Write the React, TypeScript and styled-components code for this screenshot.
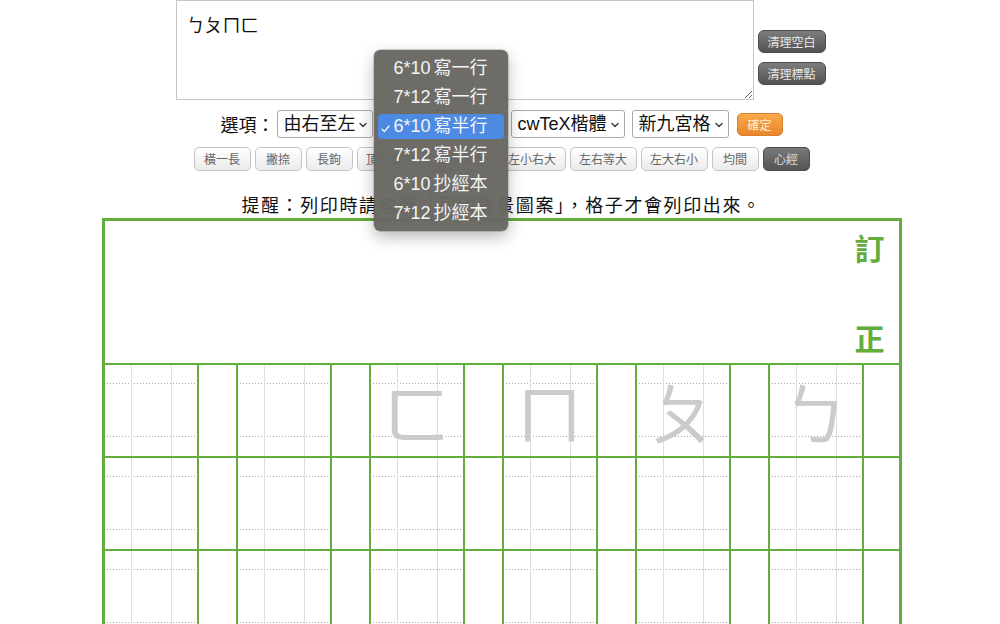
import styled, { createGlobalStyle } from "styled-components";

const GlobalStyle = createGlobalStyle`
  html, body {
    margin: 0;
    padding: 0;
    overflow: hidden;
    background: #fff;
  }
  body {
    font-family: "Liberation Sans", "Noto Sans CJK TC", sans-serif;
    color: #111;
  }
`;

const sizeOptions = [
  "6*10 寫一行",
  "7*12 寫一行",
  "6*10 寫半行",
  "7*12 寫半行",
  "6*10 抄經本",
  "7*12 抄經本",
];

const tools = [
  "橫一長",
  "撇捺",
  "長鉤",
  "頂天立地",
  "上下等大",
  "左小右大",
  "左右等大",
  "左大右小",
  "均間",
];

// ghost characters, by square index from the left (written right to left)
const ghosts: Record<number, string> = { 2: "ㄈ", 3: "ㄇ", 4: "ㄆ", 5: "ㄅ" };

const Chevron = () => (
  <svg width="8" height="6" viewBox="0 0 8 6">
    <polyline
      points="1,1.5 4,4.5 7,1.5"
      fill="none"
      stroke="#333"
      strokeWidth="1.3"
      strokeLinecap="round"
      strokeLinejoin="round"
    />
  </svg>
);

const Check = () => (
  <svg width="9" height="8" viewBox="0 0 9 8">
    <polyline
      points="1,4.2 3.4,6.6 8,1"
      fill="none"
      stroke="#fff"
      strokeWidth="1.2"
      strokeLinecap="round"
      strokeLinejoin="round"
    />
  </svg>
);

const App = () => {
  const rows = Array.from(Array(10), (_, i) => i);
  const cols = Array.from(Array(12), (_, i) => i);

  return (
    <Page>
      <GlobalStyle />
      <TopRow>
        <Editor defaultValue="ㄅㄆㄇㄈ" />
        <SideButtons>
          <DarkButton>清理空白</DarkButton>
          <DarkButton>清理標點</DarkButton>
        </SideButtons>
      </TopRow>

      <OptionsRow>
        <Label>選項：</Label>
        <SelectBox $w={96} $gap={4}>
          由右至左
          <Chevron />
        </SelectBox>
        <SelectBox $w={128} $gap={6}>
          6*10 寫半行
          <Chevron />
          <Menu>
            {sizeOptions.map((item, index) => (
              <MenuItem key={item} $active={index === 2}>
                <CheckSlot>{index === 2 && <Check />}</CheckSlot>
                {item}
              </MenuItem>
            ))}
          </Menu>
        </SelectBox>
        <SelectBox $w={114} $gap={7}>
          cwTeX楷體
          <Chevron />
        </SelectBox>
        <SelectBox $w={97} $gap={8}>
          新九宮格
          <Chevron />
        </SelectBox>
        <OrangeButton>確定</OrangeButton>
      </OptionsRow>

      <ToolRow>
        {tools.map((item) => (
          <ToolButton key={item} $w={27 + item.length * 10}>
            {item}
          </ToolButton>
        ))}
        <ToolButton $w={47} $dark>
          心經
        </ToolButton>
      </ToolRow>

      <Notice>提醒：列印時請勾選「列印背景圖案」，格子才會列印出來。</Notice>

      <Sheet>
        <SheetHeader>
          <HeaderChar>訂</HeaderChar>
          <HeaderChar>正</HeaderChar>
        </SheetHeader>
        <SheetBody>
          {rows.map((row) =>
            cols.map((col) => {
              const square = col % 2 === 0;
              const ghost = row === 0 && square ? ghosts[col / 2] : undefined;
              return (
                <Cell key={`${row}-${col}`} $square={square} $last={col === 11}>
                  {ghost && <Ghost>{ghost}</Ghost>}
                </Cell>
              );
            })
          )}
        </SheetBody>
      </Sheet>
    </Page>
  );
};

const Page = styled.div`
  padding-left: 3px;
  display: flex;
  flex-direction: column;
  align-items: center;
`;

const TopRow = styled.div`
  display: flex;
  align-items: flex-start;
  gap: 4px;
  margin-left: -2px;
`;

const Editor = styled.textarea`
  box-sizing: border-box;
  width: 578px;
  height: 100px;
  margin: 0;
  padding: 10px 10px;
  border: 1px solid #c6c6c6;
  font-family: "Noto Sans CJK TC", sans-serif;
  font-size: 18px;
  line-height: 26px;
  color: #111;
  outline: none;
`;

const SideButtons = styled.div`
  display: flex;
  flex-direction: column;
  gap: 9px;
  padding-top: 30px;
`;

const DarkButton = styled.button`
  box-sizing: border-box;
  width: 68px;
  height: 23px;
  padding: 0;
  border: 1px solid #4a4a4a;
  border-radius: 6px;
  background: linear-gradient(#7d7d7d, #525252);
  color: #e6e6e6;
  font-family: "Noto Sans CJK TC", sans-serif;
  font-size: 12px;
  line-height: 21px;
`;

const OptionsRow = styled.div`
  display: flex;
  align-items: center;
  margin-top: 10px;
  height: 28px;
`;

const Label = styled.span`
  font-family: "Noto Sans CJK TC", sans-serif;
  font-size: 18px;
  line-height: 28px;
  margin-right: 2px;
`;

const SelectBox = styled.div<{ $w: number; $gap: number }>`
  position: relative;
  box-sizing: border-box;
  width: ${(p) => p.$w}px;
  height: 28px;
  display: flex;
  align-items: center;
  justify-content: space-between;
  padding: 0 5px 0 6px;
  margin-right: ${(p) => p.$gap}px;
  border: 1px solid #a9a9a9;
  border-radius: 3px;
  background: #fff;
  font-size: 18px;
  line-height: 26px;
  white-space: nowrap;

  svg {
    margin-top: 2px;
  }
`;

const Menu = styled.div`
  position: absolute;
  z-index: 10;
  left: -4px;
  top: -61px;
  width: 134px;
  box-sizing: border-box;
  display: flex;
  flex-direction: column;
  gap: 4px;
  padding: 6px 4px 5px;
  border-radius: 6px;
  background: rgba(104, 103, 98, 0.97);
  box-shadow: 0 6px 16px rgba(0, 0, 0, 0.28), 0 0 0 0.5px rgba(0, 0, 0, 0.3);
`;

const MenuItem = styled.div<{ $active?: boolean }>`
  display: flex;
  align-items: center;
  height: 25px;
  border-radius: 4px;
  background: ${(p) => (p.$active ? "#4d8ae4" : "transparent")};
  color: #f4f4f4;
  font-size: 18px;
  line-height: 25px;
  word-spacing: -2px;
  white-space: nowrap;
`;

const CheckSlot = styled.span`
  display: flex;
  align-items: center;
  justify-content: center;
  width: 16px;
  padding-top: 2px;
`;

const OrangeButton = styled.button`
  box-sizing: border-box;
  width: 46px;
  height: 23px;
  padding: 0;
  border: 1px solid #d9802f;
  border-radius: 5px;
  background: linear-gradient(#f8a94a, #ea862c);
  color: #fdeedd;
  font-family: "Noto Sans CJK TC", sans-serif;
  font-size: 12px;
  line-height: 21px;
`;

const ToolRow = styled.div`
  display: flex;
  gap: 4px;
  margin-top: 9px;
`;

const ToolButton = styled.button<{ $w: number; $dark?: boolean }>`
  box-sizing: border-box;
  width: ${(p) => p.$w}px;
  height: 24px;
  padding: 0;
  border: 1px solid ${(p) => (p.$dark ? "#4c4c4c" : "#c4c4c4")};
  border-radius: 5px;
  background: ${(p) =>
    p.$dark ? "linear-gradient(#7a7a7a, #545454)" : "linear-gradient(#ffffff, #ebebeb)"};
  color: ${(p) => (p.$dark ? "#dadada" : "#666")};
  font-family: "Noto Sans CJK TC", sans-serif;
  font-size: 12px;
  line-height: 22px;
  white-space: nowrap;
  overflow: hidden;
`;

const Notice = styled.div`
  margin-top: 21px;
  height: 26px;
  font-family: "Noto Sans CJK TC", sans-serif;
  font-size: 18px;
  line-height: 24px;
  letter-spacing: 1.6px;
  color: #111;
`;

const green = "#63ad3d";

const Sheet = styled.div`
  box-sizing: border-box;
  width: 800px;
  border: 3px solid ${green};
  border-bottom: none;
`;

const SheetHeader = styled.div`
  height: 142px;
  box-sizing: content-box;
  border-bottom: 2px solid ${green};
  display: flex;
  flex-direction: column;
  justify-content: space-between;
  align-items: flex-end;
  padding: 0 14px 0 0;
`;

const HeaderChar = styled.div`
  font-family: "Noto Sans CJK TC", sans-serif;
  font-weight: 700;
  font-size: 30px;
  line-height: 30px;
  color: ${green};
  margin: 11px 0;
`;

const SheetBody = styled.div`
  display: grid;
  grid-template-columns: repeat(5, 94px 39px) 94px 1fr;
  grid-auto-rows: 93px;
`;

const dots = "repeating-linear-gradient(90deg, #a8a8a8 0 1px, transparent 1px 3px)";

const Cell = styled.div<{ $square: boolean; $last: boolean }>`
  box-sizing: border-box;
  border-bottom: 2px solid ${green};
  border-right: ${(p) => (p.$last ? "none" : `2px solid ${green}`)};
  display: flex;
  align-items: center;
  justify-content: center;
  ${(p) =>
    p.$square &&
    `
    background-image:
      linear-gradient(#dedede, #dedede),
      linear-gradient(#dedede, #dedede),
      ${dots},
      ${dots};
    background-size: 1px 100%, 1px 100%, calc(100% - 4px) 1px, calc(100% - 4px) 1px;
    background-position: 26px 0, 66px 0, 2px 18px, 2px calc(100% - 19px);
    background-repeat: no-repeat;
  `}
`;

const Ghost = styled.span`
  font-family: "Noto Sans CJK TC", sans-serif;
  font-size: 66px;
  line-height: 1;
  color: #cbcbcb;
  margin-top: -2px;
`;

export default App;
